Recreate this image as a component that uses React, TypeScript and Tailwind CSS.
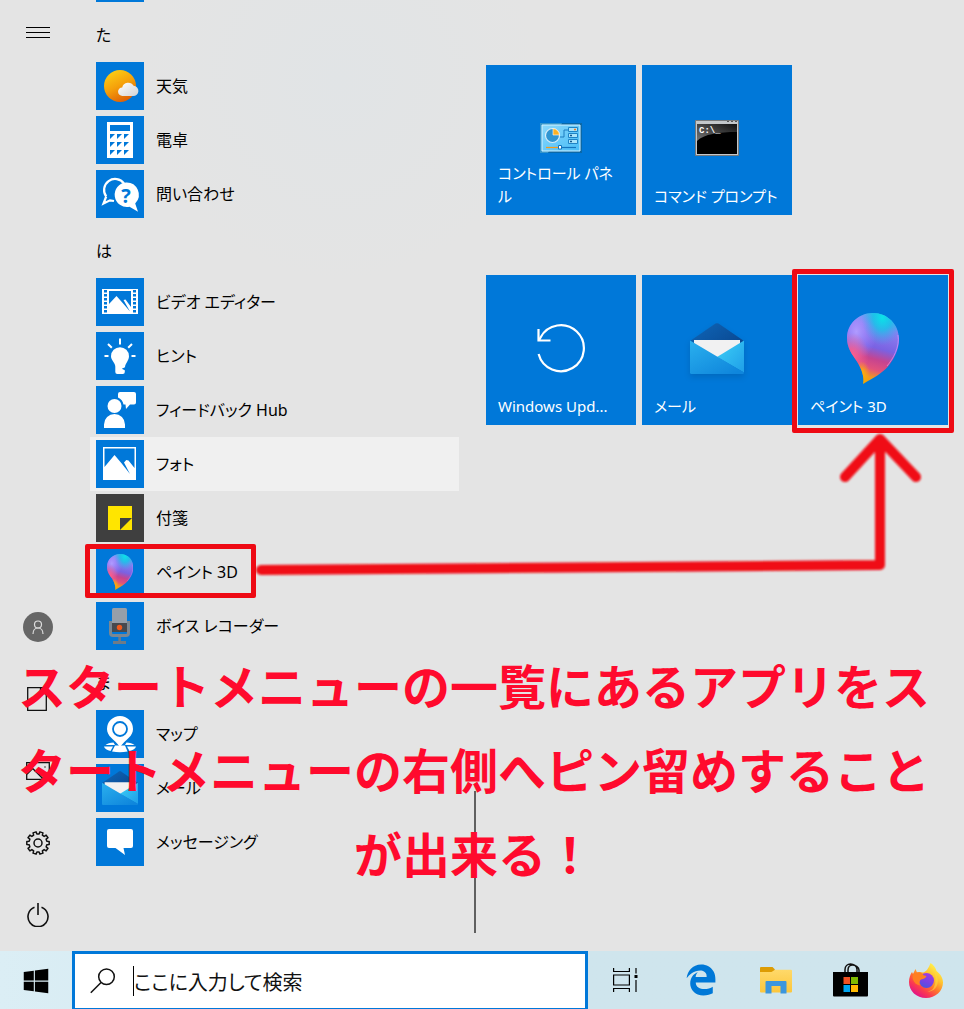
import type { ReactNode } from 'react';
import { FaEdgeLegacy } from 'react-icons/fa6';
import { FaWindows } from 'react-icons/fa';

const BLUE = '#0078d9';

function WeatherIcon() {
  return (
    <svg viewBox="0 0 48 48" className="size-12">
      <defs>
        <linearGradient id="sun" x1="0.2" y1="0" x2="0.7" y2="1">
          <stop offset="0" stopColor="#fcd116" />
          <stop offset="0.5" stopColor="#f5a00a" />
          <stop offset="1" stopColor="#dc5a06" />
        </linearGradient>
        <linearGradient id="cloud" x1="0" y1="0" x2="1" y2="1">
          <stop offset="0" stopColor="#fff" />
          <stop offset="1" stopColor="#d2d2d4" />
        </linearGradient>
      </defs>
      <circle cx="24" cy="24" r="16" fill="url(#sun)" />
      <path d="M26.5 34a4.3 4.3 0 0 1-.3-8.6 6.2 6.2 0 0 1 11.4-1.6A5.1 5.1 0 0 1 37 34z" fill="url(#cloud)" />
    </svg>
  );
}

function CalculatorIcon() {
  return (
    <svg viewBox="0 0 48 48" className="size-12">
      <path d="M11 6h26v36H11z" fill="#fff" />
      <path d="M14 9h20v6H14z" fill={BLUE} />
      {[18, 26, 34].map((y) =>
        [14, 21, 28].map((x) => <path key={`${x}-${y}`} d={`M${x} ${y}h5l-5 5z`} fill={BLUE} />),
      )}
    </svg>
  );
}

function HelpIcon() {
  return (
    <svg viewBox="0 0 48 48" className="size-12">
      <path d="M10.200 26.500A11 11 0 1 1 28 13.500M10.200 26.500L7.500 33.500l6.500-3.200 4 .7" fill="none" stroke="#fff" strokeWidth="2.200" />
      <path d="M30 12.500a12.300 12.300 0 1 0 3.500 24.300l8.500 5-2.800-8.300A12.300 12.300 0 0 0 30 12.500z" fill="#fff" />
      <text x="30" y="32.500" textAnchor="middle" fontSize="20" fontWeight="700" fontFamily="Open Sans, sans-serif" fill={BLUE}>
        ?
      </text>
    </svg>
  );
}

function VideoIcon() {
  return (
    <svg viewBox="0 0 48 48" className="size-12">
      <path d="M6 11h36v25H6z" fill="#fff" />
      {[12, 16, 20, 24, 28, 32].map((y) => (
        <path key={y} d={`M8 ${y}h3v2.600h-3zM37 ${y}h3v2.600h-3z`} fill={BLUE} />
      ))}
      <path d="M13 13h22v16l-5.500-7.500-2 .5 6.500 11.500-6-7-7.500-8.500L13 26z" fill={BLUE} />
    </svg>
  );
}

function TipsIcon() {
  return (
    <svg viewBox="0 0 48 48" className="size-12">
      <path d="M24 6.500v6M12 12l3.800 3.800M36 12l-3.800 3.800M8.500 24h4M35.500 24h4" stroke="#fff" strokeWidth="2" />
      <path d="M24 15.200a9 9 0 0 0-9 9c0 4.300 4.300 6.300 4.300 10.500V40a2 2 0 0 0 2 2h5.500a2 2 0 0 0 2-2v-1.800l-3-1.500 3.200-1.400c.2-4.300 4-6.600 4-11.100a9 9 0 0 0-9-9z" fill="#fff" />
    </svg>
  );
}

function FeedbackIcon() {
  return (
    <svg viewBox="0 0 48 48" className="size-12">
      <circle cx="18.500" cy="20" r="7" fill="#fff" />
      <path d="M8 42v-3.500a10.500 10.500 0 0 1 21 0V42z" fill="#fff" />
      <path d="M24 6h14a2 2 0 0 1 2 2v8.500a2 2 0 0 1-2 2h-4L30 23l-.5-4.500h-2A9.500 9.500 0 0 0 22 11.500V8a2 2 0 0 1 2-2z" fill="#fff" />
    </svg>
  );
}

function PhotosIcon() {
  return (
    <svg viewBox="0 0 48 48" className="size-12">
      <path d="M7 7h33v33H7z" fill="#fff" />
      <path d="M8.500 8.500h30v19.500l-6-7.500-2.200-.6-2.300 2.600 6 11.500-8.500-10.700L18.500 15l-10 12z" fill={BLUE} />
    </svg>
  );
}

function StickyIcon() {
  return (
    <svg viewBox="0 0 48 48" className="size-12">
      <path d="M12 12h24v24H12z" fill="#ffe500" />
      <path d="M24 24h12L24 36z" fill="#3f3f3f" />
    </svg>
  );
}

function PaintDrop({ id, className }: { id: string; className: string }) {
  return (
    <svg viewBox="0 0 52 71" className={className}>
      <defs>
        <linearGradient id={`${id}-base`} x1="0.600" y1="0" x2="0.400" y2="1">
          <stop offset="0" stopColor="#35c5ee" />
          <stop offset="0.200" stopColor="#8b80f2" />
          <stop offset="0.480" stopColor="#7a62e2" />
          <stop offset="0.640" stopColor="#c64490" />
          <stop offset="0.780" stopColor="#e2527c" />
          <stop offset="0.900" stopColor="#f09a20" />
          <stop offset="1" stopColor="#f0a800" />
        </linearGradient>
        <radialGradient id={`${id}-cyan`} cx="0.680" cy="0.060" r="0.400">
          <stop offset="0" stopColor="#0be3e8" />
          <stop offset="0.450" stopColor="#14c4e8" stopOpacity="0.800" />
          <stop offset="1" stopColor="#40a0f0" stopOpacity="0" />
        </radialGradient>
        <radialGradient id={`${id}-lilac`} cx="0.180" cy="0.260" r="0.400">
          <stop offset="0" stopColor="#b09bff" />
          <stop offset="1" stopColor="#a080ff" stopOpacity="0" />
        </radialGradient>
        <radialGradient id={`${id}-pink`} cx="0.100" cy="0.600" r="0.320">
          <stop offset="0" stopColor="#ff5f8c" />
          <stop offset="1" stopColor="#ff5f8c" stopOpacity="0" />
        </radialGradient>
        <radialGradient id={`${id}-gold`} cx="0.280" cy="0.840" r="0.160">
          <stop offset="0" stopColor="#ffb300" />
          <stop offset="1" stopColor="#ffb300" stopOpacity="0" />
        </radialGradient>
      </defs>
      {['base', 'lilac', 'pink', 'cyan', 'gold'].map((layer) => (
        <path
          key={layer}
          d="M26 0C40.500 0 52 11.500 52 26c0 10-4 19-11 27.500C35 60.500 26 65 16 71c1.500-7-1-14.500-6-22.500C5 41 0 35 0 25 0 11 11.500 0 26 0z"
          fill={`url(#${id}-${layer})`}
        />
      ))}
      <path d="M51 22c2 12-5 24-11 31" fill="none" stroke="#e79aff" strokeWidth="1" opacity="0.600" />
    </svg>
  );
}

function RecorderIcon() {
  return (
    <svg viewBox="0 0 48 48" className="size-12">
      <path d="M14.500 19v12a2.500 2.500 0 0 0 2.500 2.500h13a2.500 2.500 0 0 0 2.500-2.500V19" fill="none" stroke="#7b8792" strokeWidth="3" />
      <path d="M22.300 35h2.600v4h5.100v3H17v-3h5.300z" fill="#6f7b87" />
      <rect x="16" y="6" width="15" height="24" rx="1.500" fill="#969fa9" />
      <path d="M16 21h15v9H16z" fill="#47494e" />
      <circle cx="23.500" cy="25.500" r="2.700" fill="#f25a1c" />
    </svg>
  );
}

function MapsIcon() {
  return (
    <svg viewBox="0 0 48 48" className="size-12">
      <path d="M9.500 35c2-1.700 4.500-2.400 8-2.500l1.500 2.500zM8 36.500h9L14.500 41C11 40 8.500 39 8 36.500zM19 35.500h10l2.500 6c-5 1-10 1-15.500 0zM38.500 35c-2-1.700-4.500-2.400-8-2.500L29 35zM40 36.500h-9l2.500 4.500c3.500-1 6-2 6.500-4.500z" fill="#fff" />
      <path d="M24 6a13 13 0 0 0-13 13c0 7.500 7 10 13 18 6-8 13-10.500 13-18A13 13 0 0 0 24 6z" fill="#fff" />
      <circle cx="24" cy="19" r="7" fill="none" stroke={BLUE} strokeWidth="1.800" />
    </svg>
  );
}

function Envelope({ id, className }: { id: string; className: string }) {
  return (
    <svg viewBox="0 0 54 51" className={className}>
      <defs>
        <linearGradient id={`${id}-flap`} x1="0" y1="0" x2="1" y2="0.600">
          <stop offset="0" stopColor="#0f67b9" />
          <stop offset="1" stopColor="#0a4a94" />
        </linearGradient>
        <linearGradient id={`${id}-left`} x1="0" y1="0" x2="0.800" y2="1">
          <stop offset="0" stopColor="#2ab0ee" />
          <stop offset="1" stopColor="#0f86dc" />
        </linearGradient>
        <linearGradient id={`${id}-right`} x1="0" y1="0" x2="1" y2="1">
          <stop offset="0" stopColor="#3dd0f7" />
          <stop offset="1" stopColor="#1f9ee8" />
        </linearGradient>
      </defs>
      <path d="M0 18L25.500.6a3 3 0 0 1 3 0L54 18v6H0z" fill={`url(#${id}-flap)`} />
      <path d="M4 17h46v12L27 36 4 25z" fill="#f1f1f2" />
      <path d="M54 17.500v32L27 34z" fill={`url(#${id}-right)`} />
      <path d="M0 17.500l54 32a1.500 1.500 0 0 1-1.500 1.500h-51A1.500 1.500 0 0 1 0 49.500z" fill={`url(#${id}-left)`} />
    </svg>
  );
}

function MessagingIcon() {
  return (
    <svg viewBox="0 0 48 48" className="size-12">
      <path d="M13 11h22a2 2 0 0 1 2 2v15a2 2 0 0 1-2 2h-7.500l1.500 7-9.500-7H13a2 2 0 0 1-2-2V13a2 2 0 0 1 2-2z" fill="#fff" />
    </svg>
  );
}

function ControlPanelIcon() {
  return (
    <svg viewBox="0 0 42 30" className="w-[42px]">
      <defs>
        <linearGradient id="panel" x1="0" y1="0" x2="1" y2="1">
          <stop offset="0" stopColor="#8bd8fb" />
          <stop offset="1" stopColor="#48bdf8" />
        </linearGradient>
      </defs>
      <path d="M0 0h42v30H0z" fill="#0a68a8" />
      <path d="M0 0h22L8 30H0z" fill="#3595cb" />
      <path d="M2 2h38v26H2z" fill="url(#panel)" stroke="#d4f3ff" strokeWidth="1" />
      <path d="M20 14h4V7h4M28 13h8M30 18h7" fill="none" stroke="#1c7cc0" strokeWidth="1" />
      <circle cx="12.500" cy="12.500" r="7" fill="#2f95d2" stroke="#d9eff9" strokeWidth="1.200" />
      <path d="M13 12V5.500a7 7 0 0 1 6.500 6.500z" fill="#fbb124" stroke="#fff" strokeWidth="0.600" />
      <path d="M28.500 4.500h9v4h-9zM28.500 10.500h9v4h-9zM28.500 16.500h9v4h-9z" fill="#a9e4fb" stroke="#1f84c6" strokeWidth="1" />
      <path d="M34 6.500h2" stroke="#f27a1a" strokeWidth="1.400" />
      <path d="M30 12.500h2M30 18.500h2" stroke="#14598f" strokeWidth="1.400" />
      <path d="M6 24.500h13" stroke="#f59a1a" strokeWidth="1.200" />
      <path d="M20 24.500h16" stroke="#1476bf" strokeWidth="1.200" />
      <path d="M18.500 22.500h3v3.500h-3z" fill="#fff" stroke="#1476bf" strokeWidth="1" />
    </svg>
  );
}

function CommandPromptIcon() {
  return (
    <svg viewBox="0 0 44 36" className="w-11">
      <defs>
        <linearGradient id="glare" x1="0" y1="1" x2="1" y2="0">
          <stop offset="0" stopColor="#777" />
          <stop offset="1" stopColor="#111" />
        </linearGradient>
      </defs>
      <path d="M.5.5h43v35H.5z" fill="#c3c7ca" stroke="#75797c" />
      <path d="M2 4h40v30H2z" fill="#000" />
      <path d="M2 4h40v8C24 12 9 14 2 21z" fill="url(#glare)" />
      <path d="M32 1.500h2M36 1.500h2M40 1.500h2" stroke="#555" strokeWidth="1.200" />
      <text x="4" y="13" fontSize="9" fontWeight="700" fontFamily="Liberation Mono, monospace" fill="#fff">
        C:\_
      </text>
    </svg>
  );
}

function UpdateIcon() {
  return (
    <svg viewBox="-26 -26 52 52" className="w-[52px]" fill="none" stroke="#fff" strokeWidth="2.200">
      <path d="M-22.400 6A23 23 0 1 0-20.500-10.500L-22-7.500" />
      <path d="M-22.500-19v11.500h12" />
    </svg>
  );
}

// Ten teeth, turned half a step so that a notch points straight up
function GearIcon() {
  const points: string[] = [];
  for (let i = 0; i < 10; i++) {
    const mid = i * 36 + 18;
    [
      [-11, 9],
      [-8, 11.3],
      [8, 11.3],
      [11, 9],
    ].forEach(([offset, radius]) => {
      const a = ((mid + offset) * Math.PI) / 180;
      points.push(`${(Math.sin(a) * radius).toFixed(2)},${(-Math.cos(a) * radius).toFixed(2)}`);
    });
  }
  return (
    <svg viewBox="-12 -12 24 24" className="size-6" fill="none" stroke="#111" strokeWidth="1.500">
      <polygon points={points.join(' ')} strokeLinejoin="round" />
      <circle r="4" />
    </svg>
  );
}

function FolderIcon() {
  return (
    <svg viewBox="0 0 32 27" className="w-8">
      <defs>
        <linearGradient id="folder" x1="0" y1="0" x2="0" y2="1">
          <stop offset="0" stopColor="#ffd96a" />
          <stop offset="1" stopColor="#fcc63b" />
        </linearGradient>
      </defs>
      <path d="M1 0h11.500L15 2.500V8H0V1a1 1 0 0 1 1-1z" fill="#dd9c04" />
      <path d="M0 5h11.500L15 2.800h16a1 1 0 0 1 1 1V24.500a1 1 0 0 1-1 1H1a1 1 0 0 1-1-1z" fill="url(#folder)" />
      <path d="M6.500 14h19a1 1 0 0 1 1 1v11.500h-6V19h-9v7.500h-6V15a1 1 0 0 1 1-1z" fill="#3c96dd" />
    </svg>
  );
}

function StoreIcon() {
  return (
    <svg viewBox="0 0 35 34" className="w-[35px]">
      <path d="M12 10V6.500C12 3 14.500 1 17.500 1S24 3 24 6.500V10M15 10V7c0-3 2-5 4.500-5S26 4 26 7v3" fill="none" stroke="#111" strokeWidth="1.500" />
      <path d="M0 9h35v23.500a1 1 0 0 1-1 1H1a1 1 0 0 1-1-1z" />
      <path d="M10.500 14h6.500v7h-6.500z" fill="#f25022" />
      <path d="M18 14h7v7h-7z" fill="#7fba00" />
      <path d="M10.500 22h6.500v7h-6.500z" fill="#00a4ef" />
      <path d="M18 22h7v7h-7z" fill="#ffb900" />
    </svg>
  );
}

function FirefoxIcon() {
  return (
    <svg viewBox="0 0 34 35" className="w-[34px]">
      <defs>
        <linearGradient id="fox" x1="0.850" y1="0.100" x2="0.250" y2="0.950">
          <stop offset="0" stopColor="#fff44f" />
          <stop offset="0.300" stopColor="#ffc430" />
          <stop offset="0.550" stopColor="#ff7a2a" />
          <stop offset="0.780" stopColor="#fb3a50" />
          <stop offset="1" stopColor="#e31587" />
        </linearGradient>
        <linearGradient id="globe" x1="0.700" y1="0" x2="0.300" y2="1">
          <stop offset="0" stopColor="#a43be0" />
          <stop offset="0.600" stopColor="#7542e5" />
          <stop offset="1" stopColor="#4a55dc" />
        </linearGradient>
      </defs>
      <path d="M21.500 0c3 2 5 4.500 6 8 4 3 6.500 7 6.500 11.500C34 28 26.500 35 17 35S0 28 0 19c0-4 1.300-7.500 3-10l1 2 2.500-5 1.500 3.500c2-.8 4-.8 6 0 3-.5 5.500-4 7.500-9.500z" fill="url(#fox)" />
      <path d="M25.500 9c4 4 4.500 12 1 16-2 2.500-5 3.800-8 3.800 3-.8 5-2 6-3.800 2.500-4 2.500-11 1-16z" fill="#ffdb3a" opacity="0.600" />
      <circle cx="17.500" cy="17.500" r="7.500" fill="url(#globe)" />
      <path d="M4 11.500C7 8.500 11.500 8.800 13.500 11c1 1.500 2.500 1.800 4 2-.5 2-2.500 3-5.500 3.500-1.500 1.200-2 3.500-1 6-3-.5-6-2.500-7-6-.7-2-.5-3.500 0-5z" fill="#ff7f22" />
    </svg>
  );
}

type App = { name: string; icon: ReactNode; tint?: string; hovered?: boolean; marked?: boolean };

const groups: { letter: string; apps: App[] }[] = [
  {
    letter: 'た',
    apps: [
      { name: '天気', icon: <WeatherIcon /> },
      { name: '電卓', icon: <CalculatorIcon /> },
      { name: '問い合わせ', icon: <HelpIcon /> },
    ],
  },
  {
    letter: 'は',
    apps: [
      { name: 'ビデオ エディター', icon: <VideoIcon /> },
      { name: 'ヒント', icon: <TipsIcon /> },
      { name: 'フィードバック Hub', icon: <FeedbackIcon /> },
      { name: 'フォト', icon: <PhotosIcon />, hovered: true },
      { name: '付箋', icon: <StickyIcon />, tint: 'bg-[#3f3f3f]' },
      { name: 'ペイント 3D', icon: <PaintDrop id="drop-s" className="h-9" />, marked: true },
      { name: 'ボイス レコーダー', icon: <RecorderIcon /> },
    ],
  },
  {
    letter: 'ま',
    apps: [
      { name: 'マップ', icon: <MapsIcon /> },
      { name: 'メール', icon: <Envelope id="mail-s" className="w-9" /> },
      { name: 'メッセージング', icon: <MessagingIcon /> },
    ],
  },
];

const tileGroups: App[][] = [
  [
    { name: 'コントロール パネル', icon: <ControlPanelIcon /> },
    { name: 'コマンド プロンプト', icon: <CommandPromptIcon /> },
  ],
  [
    { name: 'Windows Upd...', icon: <UpdateIcon /> },
    { name: 'メール', icon: <Envelope id="mail-l" className="w-[54px] drop-shadow-md" /> },
    { name: 'ペイント 3D', icon: <PaintDrop id="drop-l" className="w-[52px]" />, marked: true },
  ],
];

function AppRow({ app }: { app: App }) {
  return (
    <li className="relative">
      <button
        type="button"
        className={`flex h-[54px] w-full items-center gap-3 px-1.5 text-left ${app.hovered ? 'bg-[#f0f0f0]' : ''}`}
      >
        <span className={`flex size-12 shrink-0 items-center justify-center ${app.tint ?? 'bg-[#0078d9]'}`}>{app.icon}</span>
        {app.name}
      </button>
      {app.marked && <span className="absolute -left-[5px] -top-px bottom-px w-[171px] rounded-xs border-5 border-[#ee0a14]" />}
    </li>
  );
}

function Tile({ app }: { app: App }) {
  return (
    <div className="relative">
      <button type="button" className="grid h-[150px] w-full bg-[#0078d9] text-left text-[15px] text-white">
        <span className="col-start-1 row-start-1 place-self-center pb-1">{app.icon}</span>
        <span className="col-start-1 row-start-1 self-end px-3 pb-[7px] leading-[23px]">{app.name}</span>
      </button>
      {app.marked && <span className="absolute -inset-x-1.5 -bottom-2 -top-1.5 rounded-xs border-5 border-[#ee0a14]" />}
    </div>
  );
}

function Rail() {
  return (
    <nav className="flex w-[76px] shrink-0 flex-col justify-between">
      <button type="button" aria-label="展開" className="flex h-16 items-center justify-center pt-0.5">
        <svg viewBox="0 0 24 12" className="w-6" stroke="#000" strokeWidth="1">
          <path d="M0 .5h24M0 5.500h24M0 10.500h24" />
        </svg>
      </button>
      <div className="flex flex-col">
        <button type="button" aria-label="アカウント" className="flex h-[72px] items-center justify-center">
          <span className="flex size-[30px] items-center justify-center rounded-full bg-[#666]">
            <svg viewBox="0 0 14 16" className="w-3.5" fill="none" stroke="#ddd" strokeWidth="1.200">
              <circle cx="7" cy="5.500" r="3.500" />
              <path d="M2 15c0-3.500 2-6 5-6s5 2.500 5 6" />
            </svg>
          </span>
        </button>
        <button type="button" aria-label="ドキュメント" className="flex h-[72px] items-center justify-center">
          <svg viewBox="0 0 22 24" className="h-6" fill="none" stroke="#111" strokeWidth="1.300">
            <path d="M.7.7h18.600v22.600H.7zM13.500.7v6h5.800" />
          </svg>
        </button>
        <button type="button" aria-label="ピクチャ" className="flex h-[72px] items-center justify-center">
          <svg viewBox="0 0 24 18" className="w-6" fill="none" stroke="#111" strokeWidth="1.300">
            <path d="M.7.7h22.600v16.600H.7zM.7 12.500l6-6 10.500 10.500M13 12.500l3.500-3 6.500 6.500" />
            <path d="M18.500 5h1" />
          </svg>
        </button>
        <button type="button" aria-label="設定" className="flex h-[72px] items-center justify-center">
          <GearIcon />
        </button>
        <button type="button" aria-label="電源" className="flex h-[72px] items-center justify-center">
          <svg viewBox="0 0 24 24" className="size-6" fill="none" stroke="#111" strokeWidth="1.600">
            <path d="M8.500 4.300a10 10 0 1 0 7 0M12 0v12" />
          </svg>
        </button>
      </div>
    </nav>
  );
}

function Taskbar() {
  return (
    <footer className="flex h-[58px] shrink-0 bg-linear-to-r from-[#dbeef5] to-[#cfe5ed] to-60%">
      <button type="button" aria-label="スタート" className="flex w-[72px] items-center justify-center pt-0.5">
        <FaWindows className="size-7" />
      </button>
      <label className="flex w-[516px] items-center border-[3px] border-b border-[#0078d9] bg-white pl-[15px]">
        <svg viewBox="0 0 26 26" className="mr-[17px] size-[26px] shrink-0" fill="none" stroke="#111" strokeWidth="1.500">
          <circle cx="16.500" cy="8.800" r="7.800" />
          <path d="M11 14.500L.8 24.700" />
        </svg>
        <span className="h-[30px] w-px shrink-0 bg-black" />
        <input
          type="text"
          aria-label="検索"
          placeholder="ここに入力して検索"
          className="min-w-0 flex-1 pt-1 text-xl outline-none placeholder:text-[#111]"
        />
      </label>
      <button type="button" aria-label="タスク ビュー" className="flex w-[75px] items-center justify-center">
        <svg viewBox="0 0 25 24" className="w-[25px]" fill="none" stroke="#000" strokeWidth="1.200">
          <path d="M.6 0v3.500h15.800V0M.6 24v-3.500h15.800V24M.6 7h15.800v10H.6zM23 0v5.500M23 12v12" />
          <path d="M21.500 7h3v3h-3z" fill="#000" stroke="none" />
        </svg>
      </button>
      <button type="button" aria-label="Microsoft Edge" className="flex w-[75px] items-center justify-center">
        <FaEdgeLegacy className="size-8 text-[#0078d7]" />
      </button>
      <button type="button" aria-label="エクスプローラー" className="flex w-[75px] items-center justify-center">
        <FolderIcon />
      </button>
      <button type="button" aria-label="Microsoft Store" className="flex w-[75px] items-center justify-center">
        <StoreIcon />
      </button>
      <button type="button" aria-label="Firefox" className="flex w-[75px] items-center justify-center">
        <FirefoxIcon />
      </button>
    </footer>
  );
}

export default function App() {
  return (
    <div className="flex min-h-screen flex-col bg-[#e4e4e4] font-['Noto_Sans','Noto_Sans_CJK_JP',sans-serif] text-base text-black [font-feature-settings:'palt']">
      <main className="relative flex flex-1 bg-[radial-gradient(circle_at_340px_80px,#e1e4e6,transparent_200px)]">
        <Rail />

        <div className="ml-3.5 w-[369px] shrink-0">
          <div className="h-[5px] px-1.5">
            <div className="h-0.5 w-12 bg-[#0078d9]" />
          </div>
          {groups.map((group) => (
            <section key={group.letter}>
              <h2 className="flex h-[54px] items-center px-1.5 pt-1.5">{group.letter}</h2>
              <ul>
                {group.apps.map((app) => (
                  <AppRow key={app.name} app={app} />
                ))}
              </ul>
            </section>
          ))}
        </div>

        <div className="mb-[18px] ml-[15px] h-[142px] w-0.5 shrink-0 self-end bg-[#606060]" />

        <div className="flex flex-1 flex-col gap-[60px] pl-2.5 pt-[65px]">
          {tileGroups.map((tiles, i) => (
            <div key={i} className="grid grid-cols-[repeat(3,150px)] gap-1.5">
              {tiles.map((app) => (
                <Tile key={app.name} app={app} />
              ))}
            </div>
          ))}
        </div>

        {/* Arrow from the list entry to its pinned tile */}
        <svg viewBox="0 0 680 160" className="pointer-events-none absolute left-[250px] top-[425px] w-[680px]">
          <defs>
            <filter id="soft" x="-5%" y="-5%" width="110%" height="110%">
              <feGaussianBlur stdDeviation="1.300" />
            </filter>
          </defs>
          <path
            d="M11 145L630 140V14M595 52l35-38 36 38"
            fill="none"
            stroke="#f00a14"
            strokeWidth="10"
            strokeLinecap="round"
            strokeLinejoin="round"
            filter="url(#soft)"
          />
        </svg>

        <p className="pointer-events-none absolute inset-x-0 bottom-[54px] pl-2 pr-6 text-center text-5xl font-bold leading-[84px] text-[#ff0a2d] [font-feature-settings:normal]">
          スタートメニューの一覧にあるアプリをスタートメニューの右側へピン留めすることが出来る！
        </p>
      </main>
      <Taskbar />
    </div>
  );
}
